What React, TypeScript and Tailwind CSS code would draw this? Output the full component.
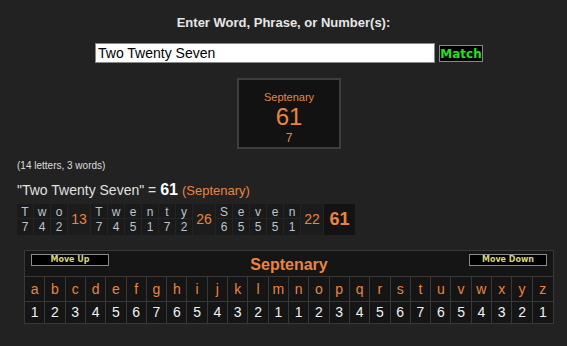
import React from 'react';

const orange = 'text-[#ea8440]';

const words = [
  { letters: [['T', 7], ['w', 4], ['o', 2]], sum: 13 },
  { letters: [['T', 7], ['w', 4], ['e', 5], ['n', 1], ['t', 7], ['y', 2]], sum: 26 },
  { letters: [['S', 6], ['e', 5], ['v', 5], ['e', 5], ['n', 1]], sum: 22 },
];

const alphabet = 'abcdefghijklmnopqrstuvwxyz'.split('');
const septenary = [1, 2, 3, 4, 5, 6, 7, 6, 5, 4, 3, 2, 1, 1, 2, 3, 4, 5, 6, 7, 6, 5, 4, 3, 2, 1];

const App = () => {
  return (
    <div className="w-[567px] h-[346px] bg-[#222222] font-['Liberation_Sans',Arial,sans-serif] overflow-hidden">
      <div className="pt-[15px] text-center text-[13px] font-bold text-[#e6e6e6] leading-[16px]">
        Enter Word, Phrase, or Number(s):
      </div>

      <div className="flex items-start mt-[12px] pl-[95px]">
        <div className="w-[340px] h-[20px] bg-white border border-[#8a8a8a] text-[14px] leading-[18px] pl-[2px] text-black">
          Two Twenty Seven
        </div>
        <button className="ml-[4px] mt-[2px] w-[44px] h-[17px] bg-black border border-[#888] text-[#22e022] text-[12px] font-bold leading-[14px] font-['DejaVu_Sans',sans-serif]">
          Match
        </button>
      </div>

      <div className="ml-[237px] mt-[15px] w-[104px] h-[71px] bg-[#121212] border-2 border-[#3e3e3e] flex flex-col items-center pt-[11px]">
        <div className={`${orange} text-[11px] leading-[13px]`}>Septenary</div>
        <div className={`${orange} text-[24px] leading-[26px]`}>61</div>
        <div className={`${orange} text-[12px] leading-[14px] mt-[1px]`}>7</div>
      </div>

      <div className="pl-[17px] mt-[11px] text-[10px] leading-[12px] text-[#dddddd]">
        (14 letters, 3 words)
      </div>

      <div className="pl-[17px] mt-[9px] flex items-baseline leading-[18px]">
        <span className="text-[14px] text-[#e0e0e0]">"Two Twenty Seven" =&nbsp;</span>
        <span className="text-[16px] font-bold text-white">61</span>
        <span className={`${orange} text-[13px] ml-[4px]`}>(Septenary)</span>
      </div>

      <div className="ml-[17px] mt-[4px] flex h-[31px] w-fit bg-[#1a1a1a]">
        {words.map((w, wi) => (
          <React.Fragment key={wi}>
            {w.letters.map(([l, n], i) => (
              <div key={i} className="w-[17px] flex flex-col border-r border-[#242424]">
                <div className="h-[15px] text-center text-[12px] leading-[16px] text-[#b9c5d1] border-b border-[#242424]">{l}</div>
                <div className="h-[16px] text-center text-[12px] leading-[16px] text-[#b9c5d1]">{n}</div>
              </div>
            ))}
            <div className={`w-[23px] flex items-center justify-center ${orange} text-[14px] bg-[#1c1c1c] border-r border-[#242424]`}>
              {w.sum}
            </div>
          </React.Fragment>
        ))}
        <div className={`w-[31px] flex items-center justify-center ${orange} text-[18px] font-bold bg-[#131313]`}>61</div>
      </div>

      <div className="ml-[24px] mt-[15px] w-[530px] border border-[#383838] bg-[#151515]">
        <div className="h-[26px] flex items-start justify-between px-[6px] pt-[3px] border-b border-[#383838]">
          <button className="w-[78px] h-[12px] bg-black border border-[#8a8a8a] text-[8px] font-bold leading-[10px] text-[#d8d47c] font-['DejaVu_Sans',sans-serif]">
            Move Up
          </button>
          <div className={`${orange} text-[16px] font-bold leading-[20px] mt-[1px]`}>Septenary</div>
          <button className="w-[78px] h-[12px] bg-black border border-[#8a8a8a] text-[8px] font-bold leading-[10px] text-[#d8d47c] font-['DejaVu_Sans',sans-serif]">
            Move Down
          </button>
        </div>
        <div className="grid grid-cols-[repeat(26,minmax(0,1fr))] border-b border-[#383838]">
          {alphabet.map((c, i) => (
            <div key={c} className={`h-[24px] flex items-center justify-center ${orange} text-[14px] ${i < 25 ? 'border-r border-[#383838]' : ''}`}>
              {c}
            </div>
          ))}
        </div>
        <div className="grid grid-cols-[repeat(26,minmax(0,1fr))]">
          {septenary.map((n, i) => (
            <div key={i} className={`h-[21px] flex items-center justify-center text-[#eef2f6] text-[14px] ${i < 25 ? 'border-r border-[#383838]' : ''}`}>
              {n}
            </div>
          ))}
        </div>
      </div>
    </div>
  );
};

export default App;
